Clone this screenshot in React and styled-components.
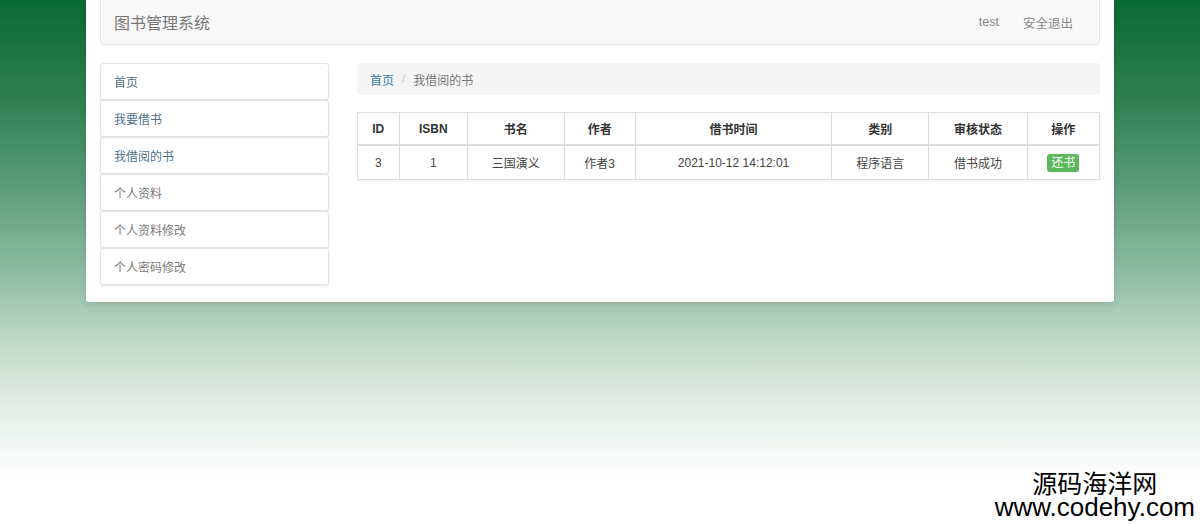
import React from "react";
import styled, { createGlobalStyle } from "styled-components";

const Global = createGlobalStyle`
  html, body { margin: 0; padding: 0; }
  body {
    width: 1200px; height: 524px; overflow: hidden;
    font-family: "Liberation Sans", "Noto Sans CJK SC", sans-serif;
    background: linear-gradient(180deg, #0a6a35 0px, #2f8053 100px, #5d9e79 190px, #93c0a4 280px, #c5dccd 350px, #e3eee7 410px, #f7faf8 455px, #ffffff 480px);
  }
`;

const Page = styled.div`
  position: relative;
  width: 1200px;
  height: 524px;
  padding: 0 86px;
  box-sizing: border-box;
`;

const Card = styled.div`
  background: #fff;
  padding: 0 14px 17px;
  box-shadow: 0 2px 6px rgba(0, 0, 0, 0.12);
  border-radius: 0 0 3px 3px;
`;

const Navbar = styled.div`
  height: 45px;
  background: #f8f8f8;
  border: 1px solid #e7e7e7;
  border-top: none;
  border-radius: 0 0 4px 4px;
  box-sizing: border-box;
  display: flex;
  align-items: center;
  padding: 0 26px 0 13px;
`;

const Brand = styled.div`
  font-size: 16px;
  color: #777;
  flex: 1;
`;

const NavLink = styled.span`
  font-size: 12.5px;
  color: #888;
  margin-left: ${(p) => p.$gap || 0}px;
`;

const Body = styled.div`
  display: flex;
  gap: 28px;
  margin-top: 18px;
`;

const Side = styled.div`
  width: 229px;
  display: flex;
  flex-direction: column;
`;

const SideItem = styled.div`
  height: 37px;
  box-sizing: border-box;
  border: 1px solid #e3e3e3;
  border-radius: 3px;
  box-shadow: 0 1px 2px rgba(0, 0, 0, 0.1);
  display: flex;
  align-items: center;
  padding-left: 13px;
  font-size: 12px;
  color: ${(p) => (p.$link ? "#4f6f8c" : "#7a7a7a")};
  background: #fff;
`;

const Main = styled.div`
  flex: 1;
`;

const Crumb = styled.div`
  height: 32px;
  background: #f5f5f5;
  border-radius: 3px;
  display: flex;
  align-items: center;
  padding-left: 13px;
  font-size: 12px;
  color: #777;
`;

const CrumbLink = styled.span`
  color: #3e7aa8;
`;

const Sep = styled.span`
  color: #ccc;
  margin: 0 8px;
`;

const Table = styled.table`
  margin-top: 17px;
  width: 100%;
  border-collapse: collapse;
  font-size: 12px;
  color: #333;
  box-shadow: 0 1px 2px rgba(0, 0, 0, 0.06);
`;

const Th = styled.th`
  height: 31px;
  border: 1px solid #ddd;
  border-bottom-width: 2px;
  font-weight: bold;
  text-align: center;
  padding: 0;
  width: ${(p) => p.$w}px;
`;

const Td = styled.td`
  height: 33px;
  border: 1px solid #ddd;
  text-align: center;
  padding: 0;
  color: #444;
`;

const Btn = styled.span`
  display: inline-block;
  background: #5cb85c;
  color: #fff;
  font-size: 12px;
  line-height: 18px;
  padding: 0 4px;
  border-radius: 3px;
`;

const Watermark = styled.div`
  position: absolute;
  right: 5px;
  bottom: 5px;
  display: flex;
  flex-direction: column;
  align-items: center;
  color: #000;
`;

const WmTitle = styled.div`
  font-family: "Noto Sans CJK SC", sans-serif;
  font-size: 25px;
  line-height: 27px;
`;

const WmUrl = styled.div`
  font-family: "Liberation Sans", sans-serif;
  font-size: 26px;
  line-height: 23px;
`;

const cols = [
  ["ID", 41], ["ISBN", 68], ["书名", 97], ["作者", 71],
  ["借书时间", 198], ["类别", 97], ["审核状态", 99], ["操作", 72],
];

const menu = [
  ["首页", true], ["我要借书", true], ["我借阅的书", true],
  ["个人资料", false], ["个人资料修改", false], ["个人密码修改", false],
];

export default function App() {
  return (
    <Page>
      <Global />
      <Card>
        <Navbar>
          <Brand>图书管理系统</Brand>
          <NavLink>test</NavLink>
          <NavLink $gap={24}>安全退出</NavLink>
        </Navbar>
        <Body>
          <Side>
            {menu.map(([t, l]) => (
              <SideItem key={t} $link={l}>{t}</SideItem>
            ))}
          </Side>
          <Main>
            <Crumb>
              <CrumbLink>首页</CrumbLink>
              <Sep>/</Sep>
              我借阅的书
            </Crumb>
            <Table>
              <thead>
                <tr>
                  {cols.map(([c, w]) => (
                    <Th key={c} $w={w}>{c}</Th>
                  ))}
                </tr>
              </thead>
              <tbody>
                <tr>
                  <Td>3</Td>
                  <Td>1</Td>
                  <Td>三国演义</Td>
                  <Td>作者3</Td>
                  <Td>2021-10-12 14:12:01</Td>
                  <Td>程序语言</Td>
                  <Td>借书成功</Td>
                  <Td><Btn>还书</Btn></Td>
                </tr>
              </tbody>
            </Table>
          </Main>
        </Body>
      </Card>
      <Watermark>
        <WmTitle>源码海洋网</WmTitle>
        <WmUrl>www.codehy.com</WmUrl>
      </Watermark>
    </Page>
  );
}
